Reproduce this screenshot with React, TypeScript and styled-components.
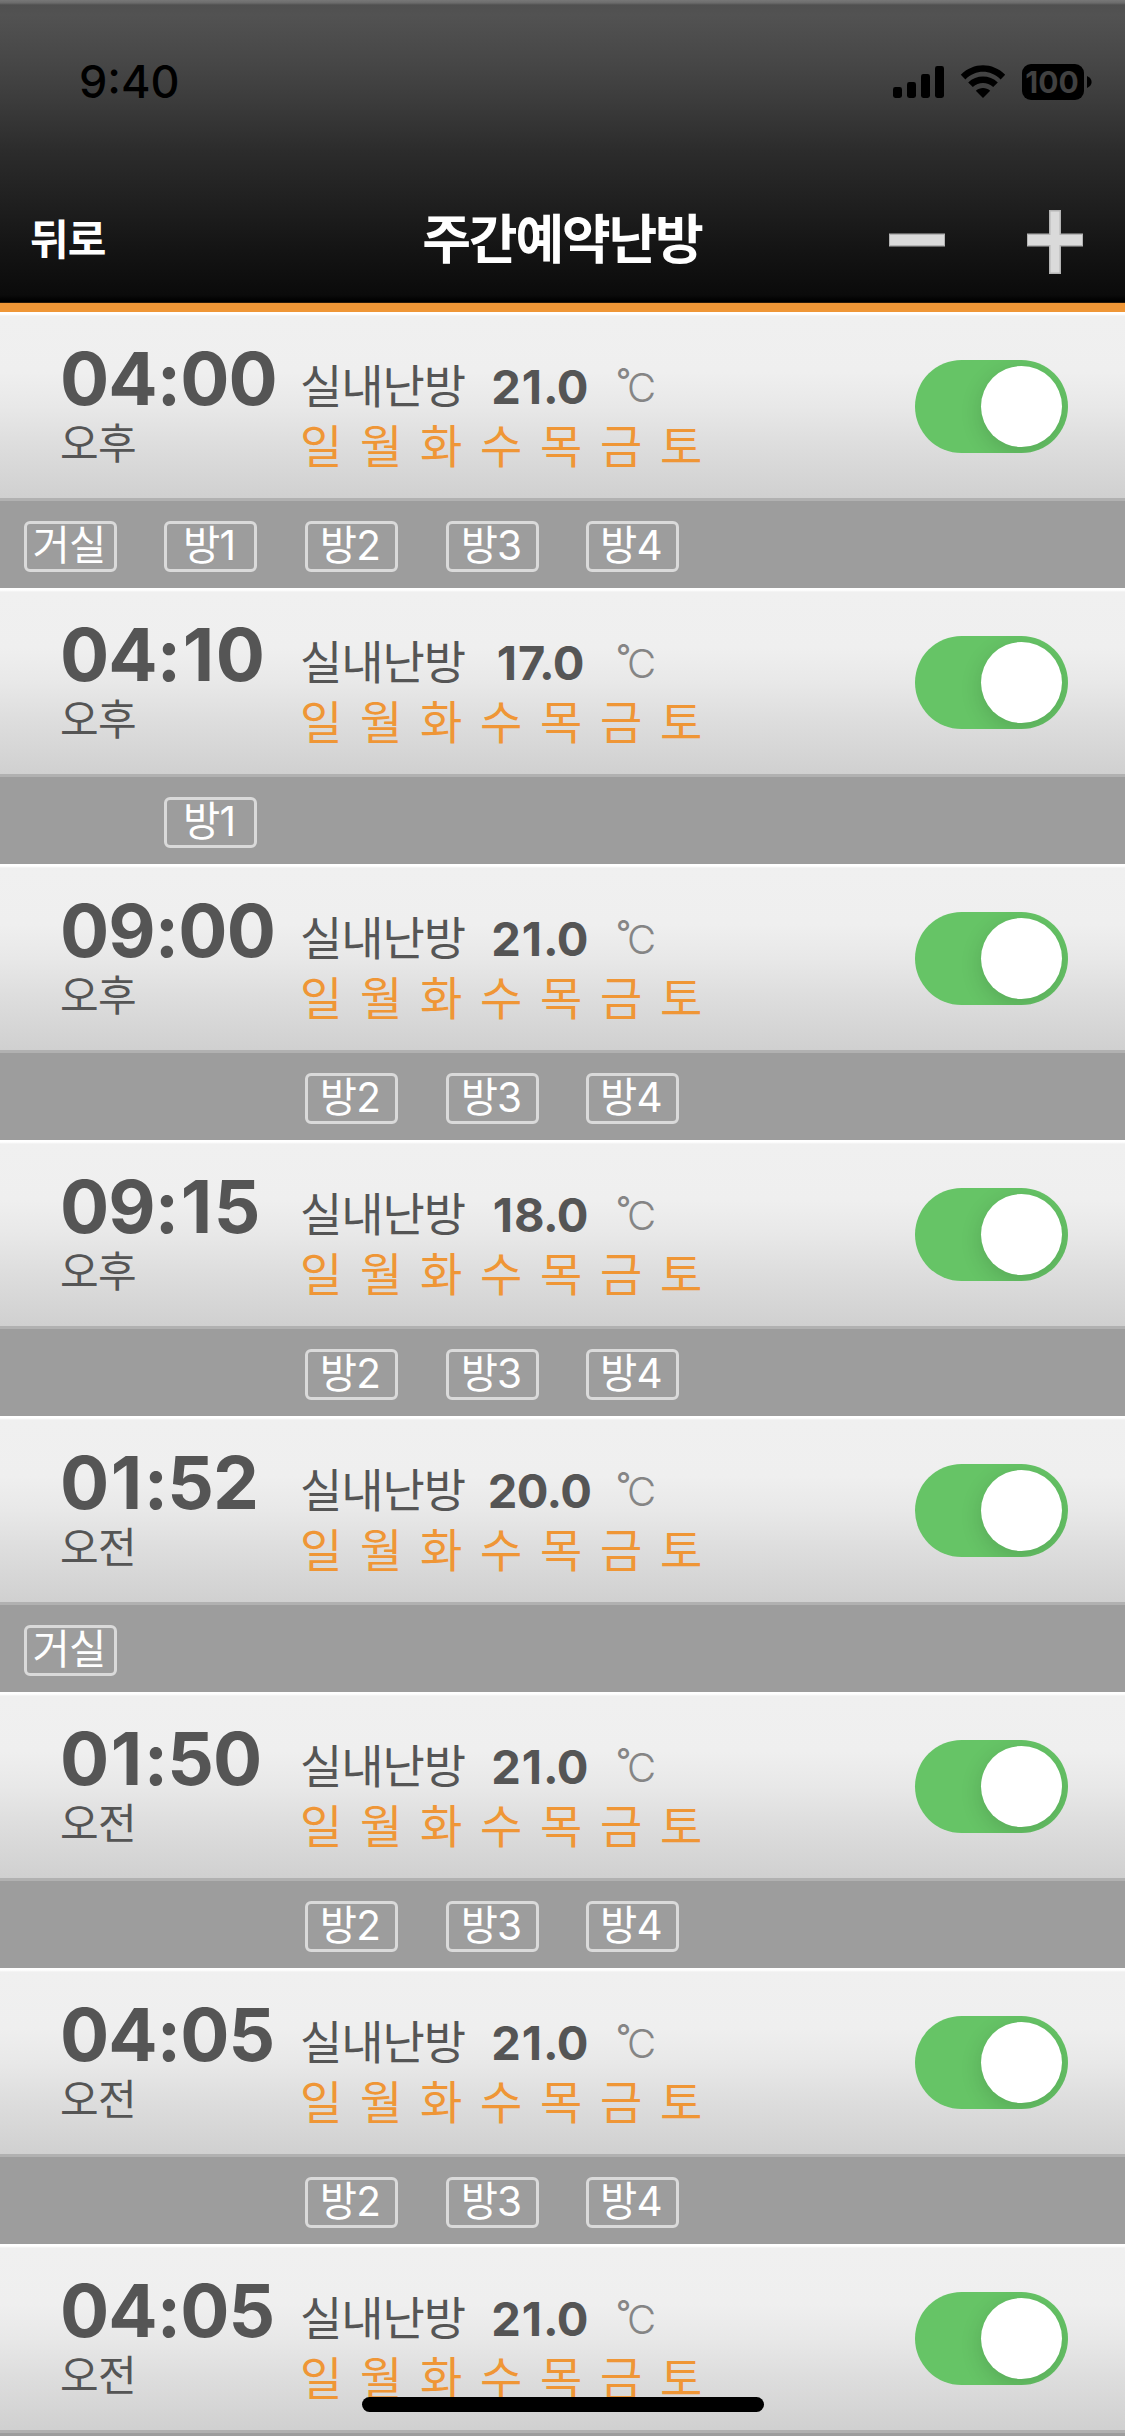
import React, { useState } from "react";
import styled, { createGlobalStyle } from "styled-components";

const GlobalStyle = createGlobalStyle`
  *, *::before, *::after { box-sizing: border-box; }
  body {
    margin: 0;
    background: #9d9d9d;
    font-family: Inter, "Noto Sans CJK KR", sans-serif;
  }
`;

const Screen = styled.main`
  position: relative;
  width: 1125px;
  height: 2436px;
  overflow: hidden;
  background: #9d9d9d;
`;

const Header = styled.header`
  height: 312px;
  border-bottom: 9px solid #ef9636;
  background: linear-gradient(
    #787878 0px,
    #6b6b6b 3px,
    #505050 5px,
    #525252 15px,
    #464646 65px,
    #3c3c3c 100px,
    #2c2c2c 150px,
    #202020 200px,
    #141414 250px,
    #0b0b0b 295px,
    #000000 301px,
    #000000 302px,
    #4d3011 303px
  );
`;

const StatusBar = styled.div`
  display: flex;
  justify-content: space-between;
  align-items: flex-start;
  height: 176px;
  padding: 58px 33px 0 79px;
`;

const Clock = styled.span`
  font-size: 45px;
  font-weight: 550;
  line-height: 48px;
  color: #000;
`;

const StatusIcons = styled.div`
  display: flex;
  align-items: flex-start;
  padding-top: 6px;
`;

const SignalIcon = styled.svg`
  margin: 2px 16px 0 0;
`;

const WifiIcon = styled.svg`
  margin: 1px 16px 0 0;
`;

const Battery = styled.span`
  width: 62px;
  height: 36px;
  padding-right: 2px;
  border-radius: 9px;
  background: #000;
  color: #414141;
  font-size: 30px;
  font-weight: 700;
  line-height: 36px;
  text-align: center;
`;

const BatteryTip = styled.svg`
  margin: 12px 0 0 3px;
`;

const NavBar = styled.nav`
  display: grid;
  grid-template-columns: 1fr auto 1fr;
  align-items: center;
  height: 127px;
  padding: 0 26px 0 30px;
  color: #fff;
`;

const BackButton = styled.button`
  justify-self: start;
  padding: 1px 0 0;
  border: 0;
  background: none;
  color: inherit;
  font: 700 42px/48px Inter, "Noto Sans CJK KR", sans-serif;
  letter-spacing: -0.8px;
`;

const Title = styled.h1`
  margin: 1px 0 0 -5px;
  font-size: 53px;
  font-weight: 700;
  line-height: 64px;
  letter-spacing: -2.2px;
`;

const Actions = styled.div`
  display: flex;
  justify-self: end;
  gap: 50px;
  padding-top: 5px;
`;

const IconButton = styled.button`
  width: 88px;
  height: 88px;
  padding: 0;
  border: 0;
  background: none;
  display: flex;
  align-items: center;
  justify-content: center;
`;

const List = styled.ul`
  margin: 0;
  padding: 0;
  list-style: none;
`;

const Entry = styled.li`
  height: 276px;
`;

const Summary = styled.div`
  display: grid;
  grid-template-columns: 240px 1fr auto;
  height: 189px;
  padding: 0 57px 0 60px;
  border-bottom: 3px solid #b1b1b1;
  color: #555;
  background: linear-gradient(
    #ffffff 0px,
    #ffffff 2px,
    #f0f0f0 4px,
    #efefef 60px,
    #e8e8e8 95px,
    #dedede 130px,
    #d0d0d0 186px
  );
`;

const TimeColumn = styled.div`
  padding-top: 31px;
`;

const Time = styled.div`
  font-size: 73px;
  font-weight: 700;
  font-kerning: none;
  line-height: 72px;
  letter-spacing: -0.9px;
`;

const NarrowDigit = styled.span`
  margin: 0 0.034em;
`;

const Period = styled.div`
  margin-top: 5px;
  font-size: 42px;
  line-height: 48px;
  letter-spacing: -0.6px;
`;

const InfoColumn = styled.div`
  padding-top: 51px;
`;

const Reading = styled.div`
  display: flex;
  font-size: 46px;
  line-height: 48px;
`;

const Mode = styled.span`
  width: 180px;
  margin-top: -1px;
  letter-spacing: -1.1px;
`;

const Temperature = styled.span`
  width: 119px;
  font-size: 47px;
  font-weight: 700;
  letter-spacing: -0.6px;
  text-align: center;
`;

const Unit = styled.span`
  display: flex;
  margin-left: 17px;
  padding-top: 1px;
  font-size: 40px;
  font-weight: 300;
  color: #858585;
`;

const Degree = styled.span`
  width: 11px;
  margin-top: -8px;
  font-size: 33px;
  font-weight: 500;
`;

const Days = styled.div`
  display: grid;
  grid-template-columns: repeat(7, 60px);
  margin-top: 10px;
  font-size: 46px;
  line-height: 48px;
  color: #ef9636;
`;

const Switch = styled.button<{ $on: boolean }>`
  display: flex;
  justify-content: ${(p) => (p.$on ? "flex-end" : "flex-start")};
  width: 153px;
  height: 93px;
  margin-top: 48px;
  padding: 6px;
  border: 0;
  border-radius: 47px;
  overflow: hidden;
  background: ${(p) => (p.$on ? "#66c466" : "#bdbdbd")};
`;

const Knob = styled.span`
  width: 81px;
  height: 81px;
  border-radius: 50%;
  background: #fff;
  box-shadow: 0 6px 22px rgba(0, 0, 0, 0.14);
`;

const Rooms = styled.div`
  display: grid;
  grid-template-columns: 140px 141px 141px 140px 93px;
  height: 87px;
  padding: 20px 0 0 24px;
  background: #9d9d9d;
`;

const Room = styled.span<{ $column: number }>`
  grid-column: ${(p) => p.$column};
  grid-row: 1;
  width: 93px;
  height: 51px;
  padding-right: 3px;
  border: 3px solid #dadada;
  border-radius: 6px;
  color: #fff;
  font-size: 40.5px;
  line-height: 44px;
  letter-spacing: -0.8px;
  text-align: center;
  white-space: nowrap;
`;

const HomeIndicator = styled.div`
  position: absolute;
  left: 362px;
  bottom: 24px;
  width: 402px;
  height: 15px;
  border-radius: 8px;
  background: #000;
`;

const DAYS = ["일", "월", "화", "수", "목", "금", "토"];
const ROOMS = ["거실", "방1", "방2", "방3", "방4"];

interface Schedule {
  time: string;
  period: string;
  temp: string;
  rooms: number[];
}

const SCHEDULES: Schedule[] = [
  { time: "04:00", period: "오후", temp: "21.0", rooms: [0, 1, 2, 3, 4] },
  { time: "04:10", period: "오후", temp: "17.0", rooms: [1] },
  { time: "09:00", period: "오후", temp: "21.0", rooms: [2, 3, 4] },
  { time: "09:15", period: "오후", temp: "18.0", rooms: [2, 3, 4] },
  { time: "01:52", period: "오전", temp: "20.0", rooms: [0] },
  { time: "01:50", period: "오전", temp: "21.0", rooms: [2, 3, 4] },
  { time: "04:05", period: "오전", temp: "21.0", rooms: [2, 3, 4] },
  { time: "04:05", period: "오전", temp: "21.0", rooms: [] },
];

/* Inter's "1" is narrow, so it gets a little air on both sides. */
function Digits({ value }: { value: string }) {
  return (
    <>
      {value
        .split(/(1)/)
        .map((part, i) => (part === "1" ? <NarrowDigit key={i}>1</NarrowDigit> : part))}
    </>
  );
}

function ScheduleRow({ time, period, temp, rooms }: Schedule) {
  const [on, setOn] = useState(true);
  return (
    <Entry>
      <Summary>
        <TimeColumn>
          <Time>
            <Digits value={time} />
          </Time>
          <Period>{period}</Period>
        </TimeColumn>
        <InfoColumn>
          <Reading>
            <Mode>실내난방</Mode>
            <Temperature>
              <Digits value={temp} />
            </Temperature>
            <Unit>
              <Degree>°</Degree>C
            </Unit>
          </Reading>
          <Days>
            {DAYS.map((day) => (
              <span key={day}>{day}</span>
            ))}
          </Days>
        </InfoColumn>
        <Switch $on={on} role="switch" aria-checked={on} onClick={() => setOn(!on)}>
          <Knob />
        </Switch>
      </Summary>
      <Rooms>
        {rooms.map((room) => (
          <Room key={room} $column={room + 1}>
            {ROOMS[room]}
          </Room>
        ))}
      </Rooms>
    </Entry>
  );
}

export default function App() {
  return (
    <Screen>
      <GlobalStyle />
      <Header>
        <StatusBar>
          <Clock>9:40</Clock>
          <StatusIcons>
            <SignalIcon width="51" height="32" viewBox="0 0 51 32">
              <rect x="0" y="21" width="9" height="11" rx="2.4" />
              <rect x="14" y="16" width="9" height="16" rx="2.4" />
              <rect x="28" y="8" width="9" height="24" rx="2.4" />
              <rect x="42" y="0" width="9" height="32" rx="2.4" />
            </SignalIcon>
            <WifiIcon width="46" height="33" viewBox="0 0 46 33">
              <path d="M0.8 9.8C13.4-2.9 32.6-2.9 45.2 9.8L40.6 14.4C30.2 4.2 15.8 4.2 5.4 14.4Z" />
              <path d="M8.2 17.4C16.4 9.5 29.6 9.5 37.8 17.4L33.2 22C27.2 16.8 18.8 16.8 12.800 22Z" />
              <path d="M15.8 25.8C20 22 26 22 30.2 25.8L23 33Z" />
            </WifiIcon>
            <Battery>100</Battery>
            <BatteryTip width="5" height="12" viewBox="0 0 5 12">
              <path d="M0 0Q4.6 2.2 4.6 6T0 12Z" />
            </BatteryTip>
          </StatusIcons>
        </StatusBar>
        <NavBar>
          <BackButton>뒤로</BackButton>
          <Title>주간예약난방</Title>
          <Actions>
            <IconButton aria-label="삭제">
              <svg width="56" height="64" viewBox="0 0 56 64">
                <rect x="0" y="23.5" width="56" height="13" fill="#b4b4b4" />
                <rect x="1" y="25" width="54" height="10" fill="#dadada" />
              </svg>
            </IconButton>
            <IconButton aria-label="추가">
              <svg width="56" height="64" viewBox="0 0 56 64">
                <path d="M22 0h12v23.5h22v13H34V64H22V36.5H0v-13h22z" fill="#b4b4b4" />
                <path d="M23.5 1.5h9V25H55v10H32.5v27.5h-9V35H1V25h22.5z" fill="#dadada" />
              </svg>
            </IconButton>
          </Actions>
        </NavBar>
      </Header>
      <List>
        {SCHEDULES.map((schedule, index) => (
          <ScheduleRow key={index} {...schedule} />
        ))}
      </List>
      <HomeIndicator />
    </Screen>
  );
}
